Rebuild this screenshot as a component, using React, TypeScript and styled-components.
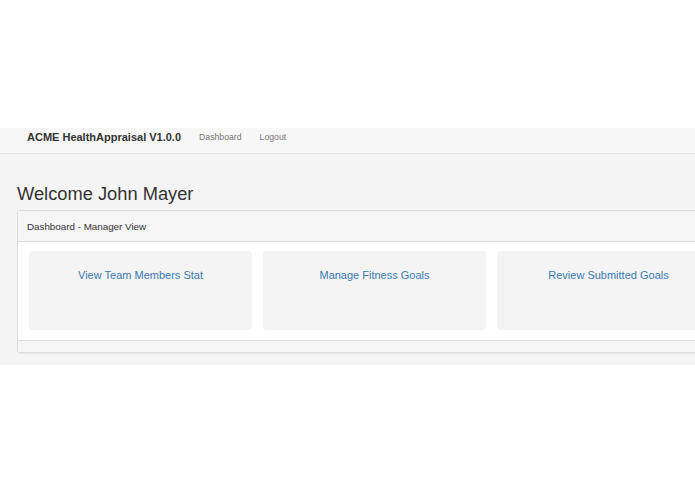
import React from "react";
import styled, { createGlobalStyle } from "styled-components";

const GlobalStyle = createGlobalStyle`
  html, body {
    margin: 0;
    padding: 0;
    background: #ffffff;
    font-family: "Liberation Sans", Arial, sans-serif;
    color: #333333;
  }
`;

const TopSpace = styled.div`
  height: 128px;
  background: #ffffff;
`;

const Page = styled.div`
  height: 237px;
  background: #f4f4f4;
  overflow: hidden;
`;

const Navbar = styled.nav`
  display: flex;
  align-items: center;
  height: 24px;
  padding-left: 27px;
  padding-bottom: 1px;
  background: #f7f7f7;
  border-bottom: 1px solid #e8e8e8;
`;

const Brand = styled.a`
  font-size: 11px;
  font-weight: bold;
  color: #333333;
  margin-right: 18px;
  margin-top: -6px;
`;

const NavLink = styled.a`
  font-size: 8.7px;
  color: #777777;
  margin-right: 18px;
  margin-top: -6px;
`;

const Content = styled.div`
  padding-left: 17px;
`;

const Title = styled.h1`
  margin: 29px 0 5px;
  font-size: 18.3px;
  font-weight: normal;
  line-height: 22px;
  color: #333333;
`;

const Panel = styled.div`
  width: 714px;
  background: #ffffff;
  border: 1px solid #dddddd;
  border-radius: 3px;
  box-shadow: 0 1px 1px rgba(0, 0, 0, 0.05);
`;

const PanelHeading = styled.div`
  height: 30px;
  display: flex;
  align-items: center;
  padding-left: 9px;
  font-size: 9.8px;
  color: #333333;
  background: #f5f5f5;
  border-bottom: 1px solid #dddddd;
`;

const PanelBody = styled.div`
  display: grid;
  grid-template-columns: repeat(3, 223px);
  gap: 11px;
  padding: 9px 11px 10px;
`;

const Card = styled.a`
  height: 79px;
  padding-top: 17px;
  box-sizing: border-box;
  background: #f4f4f4;
  border-radius: 4px;
  text-align: center;
  font-size: 11px;
  line-height: 15px;
  color: #3a78b0;
  text-decoration: none;
`;

const PanelFooter = styled.div`
  height: 11px;
  background: #f5f5f5;
  border-top: 1px solid #dddddd;
`;

const cards = ["View Team Members Stat", "Manage Fitness Goals", "Review Submitted Goals"];

export default function App() {
  return (
    <>
      <GlobalStyle />
      <TopSpace />
      <Page>
        <Navbar>
          <Brand>ACME HealthAppraisal V1.0.0</Brand>
          <NavLink>Dashboard</NavLink>
          <NavLink>Logout</NavLink>
        </Navbar>
        <Content>
          <Title>Welcome John Mayer</Title>
          <Panel>
            <PanelHeading>Dashboard - Manager View</PanelHeading>
            <PanelBody>
              {cards.map((label) => (
                <Card key={label}>{label}</Card>
              ))}
            </PanelBody>
            <PanelFooter />
          </Panel>
        </Content>
      </Page>
    </>
  );
}
